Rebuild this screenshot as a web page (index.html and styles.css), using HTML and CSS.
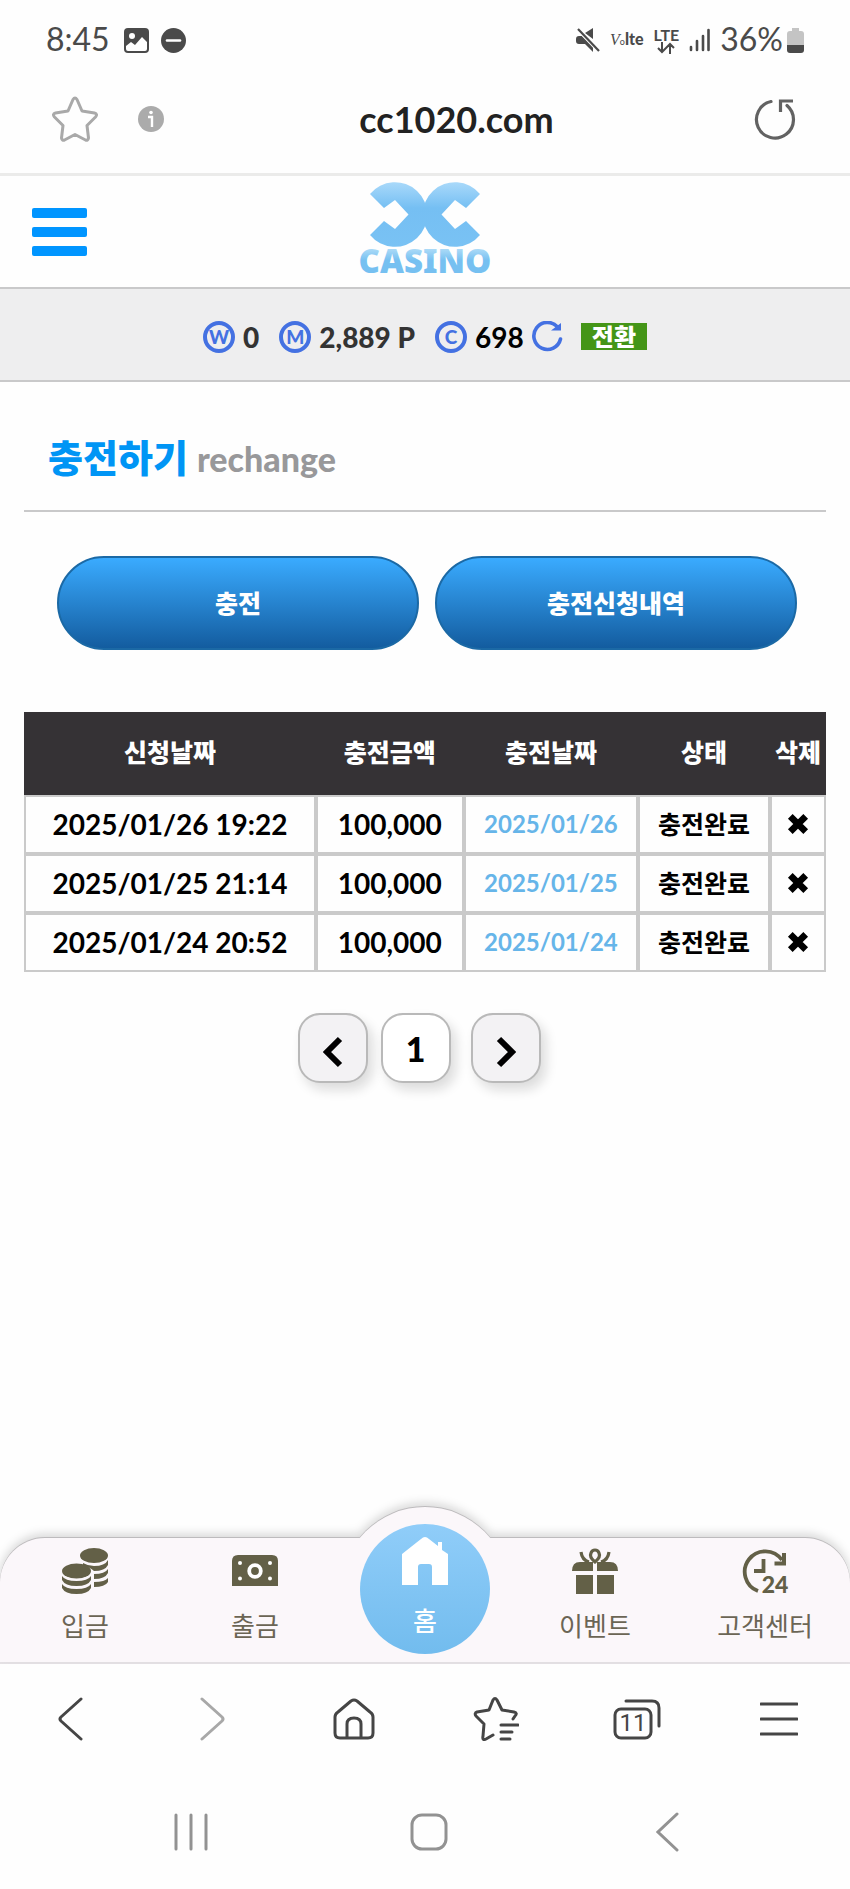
FILE: index.html
```html
<!DOCTYPE html>
<html lang="ko">
<head>
  <meta charset="UTF-8">
  <meta name="viewport" content="width=device-width, initial-scale=1.0">
  <title>충전하기</title>
  <link rel="stylesheet" href="styles.css">
</head>
<body>
  <div class="status-bar">
    <span class="status-text">8:45</span>
    <svg class="status-picture" width="25" height="25" viewBox="0 0 25 25">
      <rect width="25" height="25" rx="4" fill="#4a4a4a"/>
      <circle cx="8" cy="8" r="3" fill="#fff"/>
      <path d="M2 18l5-4 4 3 7-8 5 5v7q0 2-2 2H4q-2 0-2-2z" fill="#fff"/>
    </svg>
    <svg class="status-dnd" width="25" height="25" viewBox="0 0 25 25">
      <circle cx="12.5" cy="12.5" r="12.5" fill="#4a4a4a"/>
      <path d="M6 12.5h13" stroke="#fff" stroke-width="2.6" stroke-linecap="round"/>
    </svg>
    <div class="status-right">
      <svg width="24" height="24" viewBox="0 0 24 24">
        <path d="M17 0v11L9 5zM0 11q0-3 3-3h3l11 10v6l-8-8H3q-3 0-3-3z" fill="#4a4a4a"/>
        <path d="M2 1l20 21" stroke="#fff" stroke-width="4"/>
        <path d="M2 1l21 22" stroke="#4a4a4a" stroke-width="2.2"/>
      </svg>
      <span class="volte"><i>V</i><small>o</small><b>lte</b></span>
      <span class="lte">LTE
        <svg width="18" height="12" viewBox="0 0 18 12" fill="none" stroke="#4a4a4a" stroke-width="2">
          <path d="M5 0v10M1 6l4 4 4-4M13 12V2M9 6l4-4 4 4"/>
        </svg>
      </span>
      <svg width="21" height="24" viewBox="0 0 21 24" stroke="#4a4a4a" stroke-width="2.6" stroke-linecap="round">
        <path d="M2 19v3M8 13v9M14 8v14M19.500 2v20"/>
      </svg>
      <span class="status-text battery-text">36%</span>
      <svg width="17" height="25" viewBox="0 0 17 25">
        <path d="M5 0h7v3h2q3 0 3 3v12H0V6q0-3 3-3h2z" fill="#c4c4c4"/>
        <path d="M0 17h17v5q0 3-3 3H3q-3 0-3-3z" fill="#4a4a4a"/>
      </svg>
    </div>
  </div>

  <div class="url-bar">
    <button class="icon-btn" aria-label="Bookmark">
      <svg width="46" height="46" viewBox="0 0 46 46" fill="none" stroke="#a9a9a9" stroke-width="3" stroke-linejoin="round">
        <path d="M21 3.500Q23 .5 25 3.500L30 15l12.500 2Q46 18 43.500 21L35 29.500l1.500 12.500Q36 45 33.500 44L23 38.500 12.500 44Q10 45 9.500 42L11 29.500 2.500 21Q0 18 3.500 17L16 15z"/>
      </svg>
    </button>
    <button class="icon-btn" aria-label="Site information">
      <svg width="26" height="26" viewBox="0 0 26 26">
        <circle cx="13" cy="13" r="13" fill="#ababab"/>
        <circle cx="13" cy="6.500" r="1.800" fill="#fff"/>
        <path d="M10 11h4v10" fill="none" stroke="#fff" stroke-width="2.400"/>
      </svg>
    </button>
    <span class="url">cc1020.com</span>
    <button class="icon-btn" aria-label="Reload">
      <svg width="42" height="42" viewBox="0 0 42 42" fill="none" stroke="#626262" stroke-width="3.200" stroke-linecap="round">
        <path d="M17 3.500A18.500 18.500 0 1 0 33 7.500"/>
        <path d="M26.500 14V3H39" stroke-linecap="butt"/>
      </svg>
    </button>
  </div>

  <header class="site-header">
    <button class="menu-btn" aria-label="메뉴"><span></span><span></span><span></span></button>
    <a class="logo" href="#" aria-label="CASINO">
      <svg width="134" height="98" viewBox="0 14 134 98">
        <defs>
          <linearGradient id="mark" x1="0" y1="0" x2="0" y2="1">
            <stop offset="0" stop-color="#a9d9fa"/>
            <stop offset=".4" stop-color="#75bff3"/>
            <stop offset="1" stop-color="#79c2f4"/>
          </linearGradient>
          <linearGradient id="word" x1="0" y1="0" x2="0" y2="1">
            <stop offset=".2" stop-color="#b5dff8"/>
            <stop offset=".5" stop-color="#76c0f1"/>
          </linearGradient>
        </defs>
        <g fill="url(#mark)">
          <path d="M122 25L108 39 97 31 83.500 45.500 97 60l11-8 14 14A32.300 32.300 0 1 1 122 25z"/>
          <path d="M12 25L26 39 37 31 50.500 45.500 37 60 26 52 12 66A32.300 32.300 0 1 0 12 25z"/>
        </g>
        <text class="logo-word" x="67" y="104" text-anchor="middle" fill="url(#word)">CASINO</text>
      </svg>
    </a>
  </header>

  <section class="wallet">
    <span class="coin">W</span>
    <span class="amount">0</span>
    <span class="coin">M</span>
    <span class="amount">2,889 P</span>
    <span class="coin">C</span>
    <span class="amount casino">698</span>
    <button class="icon-btn" aria-label="새로고침">
      <svg width="31" height="32" viewBox="0 0 31 32" fill="none" stroke="#4471e2" stroke-width="3.600">
        <path d="M25.500 6A13.500 13.500 0 1 0 28.500 18" stroke-linecap="round"/>
        <path d="M19 9.500h10V2z" fill="#4471e2" stroke="none"/>
      </svg>
    </button>
    <button class="convert-btn">전환</button>
  </section>

  <main>
    <h1 class="page-title">충전하기 <small>rechange</small></h1>

    <div class="tabs">
      <button>충전</button>
      <button>충전신청내역</button>
    </div>

    <table class="history">
      <thead>
        <tr><th class="col-request">신청날짜</th><th class="col-amount">충전금액</th><th class="col-date">충전날짜</th><th class="col-state">상태</th><th class="col-delete">삭제</th></tr>
      </thead>
      <tbody>
        <tr>
          <td>2025/01/26 19:22</td><td>100,000</td><td class="done">2025/01/26</td><td class="state">충전완료</td>
          <td><button class="icon-btn" aria-label="삭제"><svg class="cross" viewBox="0 0 20 20"><path d="M3 3l14 14M17 3L3 17"/></svg></button></td>
        </tr>
        <tr>
          <td>2025/01/25 21:14</td><td>100,000</td><td class="done">2025/01/25</td><td class="state">충전완료</td>
          <td><button class="icon-btn" aria-label="삭제"><svg class="cross" viewBox="0 0 20 20"><path d="M3 3l14 14M17 3L3 17"/></svg></button></td>
        </tr>
        <tr>
          <td>2025/01/24 20:52</td><td>100,000</td><td class="done">2025/01/24</td><td class="state">충전완료</td>
          <td><button class="icon-btn" aria-label="삭제"><svg class="cross" viewBox="0 0 20 20"><path d="M3 3l14 14M17 3L3 17"/></svg></button></td>
        </tr>
      </tbody>
    </table>

    <nav class="pagination">
      <button aria-label="이전"><svg width="20" height="32" viewBox="0 0 20 32"><path d="M17 3L4 16l13 13"/></svg></button>
      <button class="current">1</button>
      <button class="next" aria-label="다음"><svg width="20" height="32" viewBox="0 0 20 32"><path d="M3 3l13 13L3 29"/></svg></button>
    </nav>
  </main>

  <nav class="bottom-nav">
    <div class="nav-shape"></div>
    <a href="#">
      <svg width="46" height="46" viewBox="0 0 46 46" fill="#636047">
        <ellipse cx="32" cy="7.500" rx="14" ry="7.500"/>
        <path d="M46 12v5q-3 6-14 6-4-4-11-5v-3q5 3 11 3 11 0 14-6zM46 21v4q-3 6-14 6v-5q11 0 14-5zM46 30v4q-3 5-14 5v-5q11 0 14-4z"/>
        <ellipse cx="14.500" cy="23" rx="14.500" ry="7.500"/>
        <path d="M0 28q3 5 14.500 5T29 28v4q-3 6-14.500 6T0 32zM0 36q3 5 14.500 5T29 36v4q-3 6-14.500 6T0 40z"/>
      </svg>
      <span>입금</span>
    </a>
    <a href="#">
      <svg width="46" height="46" viewBox="0 0 46 46">
        <path d="M0 13q0-6 6-6h34q6 0 6 6v25H0z" fill="#636047"/>
        <circle cx="23" cy="23" r="5.800" fill="none" stroke="#fff" stroke-width="3.800"/>
        <g fill="#fff"><circle cx="8" cy="15" r="2"/><circle cx="38" cy="15" r="2"/><circle cx="8" cy="30.500" r="2"/><circle cx="38" cy="30.500" r="2"/></g>
      </svg>
      <span>출금</span>
    </a>
    <a class="home" href="#">
      <svg width="48" height="48" viewBox="0 0 48 48" fill="#fff">
        <path d="M24 0q2 0 4 2l9 7V5h4v8l6 4v31H31V30q0-3-3-3h-8q-3 0-3 3v18H1V17L20 2q2-2 4-2z"/>
      </svg>
      <span>홈</span>
    </a>
    <a href="#">
      <svg width="46" height="46" viewBox="0 0 46 46" fill="#636047">
        <path d="M0 23q0-9 8-9h13v9zM46 23q0-9-8-9H25v9zM4 27h17v19H4zM25 27h17v19H25z"/>
        <path d="M9 4q1 8 8 10M37 4q-1 8-8 10M23 14q-6-5-4-9 1-3 4-3t4 3q2 4-4 9z" fill="none" stroke="#636047" stroke-width="3.200"/>
        <path d="M21 18h4v28h-4z" fill="#fbf7fa"/>
      </svg>
      <span>이벤트</span>
    </a>
    <a href="#">
      <svg class="support" width="48" height="46" viewBox="0 0 48 46" fill="none" stroke="#636047" stroke-width="3.800">
        <path d="M17 43A20.500 20.500 0 1 1 41 12"/>
        <path d="M33.500 15.500H43V5" stroke-width="4"/>
        <path d="M22.500 11v12H13"/>
        <text class="hours" x="34" y="45" text-anchor="middle">24</text>
      </svg>
      <span>고객센터</span>
    </a>
  </nav>

  <div class="browser-bar">
    <button class="icon-btn" aria-label="Back">
      <svg width="26" height="44" viewBox="0 0 26 44"><path d="M23 2L3 20q-2 2 0 4l20 18"/></svg>
    </button>
    <button class="icon-btn faded" aria-label="Forward">
      <svg width="26" height="44" viewBox="0 0 26 44"><path d="M3 2l20 18q2 2 0 4L3 42"/></svg>
    </button>
    <button class="icon-btn" aria-label="Home">
      <svg width="42" height="42" viewBox="0 0 42 42"><path d="M2 19q0-3 3-5L18 3q3-2 6 0l13 11q3 2 3 5v16q0 5-5 5H7q-5 0-5-5zM14 39V26q0-6 7-6t7 6v13"/></svg>
    </button>
    <button class="icon-btn" aria-label="Bookmarks">
      <svg width="46" height="44" viewBox="0 0 46 44"><path d="M20 38l-7 4q-4 2-3-3l1-12-8-8q-2-3 1-4l12-2 4-10q2-3 4 0l5 10 12 2q4 1 1 4l-2 3M28 28h17M28 35h11M28 42h9"/></svg>
    </button>
    <button class="icon-btn" aria-label="Tabs">
      <svg width="48" height="42" viewBox="0 0 48 42">
        <rect x="2" y="11" width="36" height="29" rx="6"/>
        <path d="M13 3h26q7 0 7 7v18"/>
        <text class="tab-count" x="20" y="33" text-anchor="middle">11</text>
      </svg>
    </button>
    <button class="icon-btn" aria-label="Menu">
      <svg width="38" height="36" viewBox="0 0 38 36"><path d="M1 3h36M1 18h36M1 33h36"/></svg>
    </button>
  </div>

  <div class="system-bar">
    <button class="icon-btn" aria-label="Recents">
      <svg width="36" height="38" viewBox="0 0 36 38"><path d="M3 2v34M18 2v34M33 2v34"/></svg>
    </button>
    <button class="icon-btn" aria-label="Home screen">
      <svg width="38" height="38" viewBox="0 0 38 38"><rect x="2" y="2" width="34" height="34" rx="10"/></svg>
    </button>
    <button class="icon-btn" aria-label="System back">
      <svg width="24" height="40" viewBox="0 0 24 40"><path d="M21 2L2 20l19 18"/></svg>
    </button>
  </div>
</body>
</html>
```

FILE: styles.css
```css
* {
  box-sizing: border-box;
}
body {
  margin: 0;
  min-height: 100vh;
  display: flex;
  flex-direction: column;
  background-color: #fefefe;
  color: #000;
  font-family: Lato, 'Noto Sans CJK KR', sans-serif;
}
button {
  font-family: inherit;
  cursor: pointer;
}
a {
  text-decoration: none;
}
svg {
  display: block;
  flex-shrink: 0;
}
.icon-btn {
  display: flex;
  align-items: center;
  justify-content: center;
  padding: 0;
  border: none;
  background: none;
}

/* phone status bar */
.status-bar {
  display: flex;
  align-items: center;
  height: 80px;
  padding: 0 46px;
  color: #4a4a4a;
}
.status-text {
  padding-bottom: 2px;
  font-size: 32px;
  line-height: 40px;
}
.status-picture {
  margin-left: 14px;
}
.status-dnd {
  margin-left: 12px;
}
.status-right {
  display: flex;
  align-items: center;
  gap: 10px;
  margin-left: auto;
}
.volte {
  font-size: 16px;
  line-height: 20px;
}
.volte i {
  font-family: 'Liberation Serif', serif;
}
.volte small {
  font-size: 9px;
}
.volte b {
  font-weight: 900;
}
.lte {
  display: flex;
  flex-direction: column;
  align-items: center;
  font-size: 16px;
  font-weight: 700;
  line-height: 15px;
}
.battery-text {
  margin-right: -6px;
}

.url-bar {
  display: flex;
  align-items: center;
  height: 96px;
  padding: 0 54px 16px 52px;
  border-bottom: 3px solid #ebebea;
}
.url-bar .icon-btn + .icon-btn {
  margin-left: 40px;
}
.url {
  flex: 1;
  padding-right: 5px;
  color: #222;
  font-size: 36px;
  font-weight: 700;
  line-height: 40px;
  text-align: center;
}

/* site header */
.site-header {
  display: grid;
  grid-template-columns: 1fr auto 1fr;
  align-items: center;
  height: 113px;
  padding: 0 32px;
  border-bottom: 2px solid #c9c9ca;
}
.menu-btn {
  display: flex;
  flex-direction: column;
  gap: 9px;
  width: 55px;
  padding: 0;
  border: none;
  background: none;
}
.menu-btn span {
  height: 10px;
  border-radius: 2px;
  background-color: #0095ff;
}
.logo svg {
  overflow: visible;
}
.logo-word {
  font-family: 'Noto Sans', sans-serif;
  font-size: 33px;
  font-weight: 900;
}

.wallet {
  display: flex;
  align-items: center;
  justify-content: center;
  height: 93px;
  padding-top: 4px;
  border-bottom: 2px solid #c9c9ca;
  background-color: #eeeeef;
}
.coin {
  display: flex;
  align-items: center;
  justify-content: center;
  width: 32px;
  height: 32px;
  border: 4px solid #4471e2;
  border-radius: 50%;
  color: #4471e2;
  font-size: 19px;
  font-weight: 900;
  line-height: 24px;
}
.amount {
  margin: 0 20px 0 8px;
  color: #333;
  font-size: 28px;
  font-weight: 900;
  line-height: 32px;
}
.casino {
  margin-right: 8px;
  color: #000;
  font-weight: 700;
}
.convert-btn {
  height: 27px;
  margin-left: 18px;
  padding: 0 11px;
  border: none;
  background-color: #449517;
  color: #fff;
  font-size: 24px;
  font-weight: 900;
  line-height: 24px;
}

/* content */
main {
  flex: 1;
  padding: 48px 24px 0;
}
.page-title {
  margin: 0;
  padding: 0 24px 24px;
  border-bottom: 2px solid #c9c9ca;
  color: #0095f5;
  font-size: 38px;
  font-weight: 900;
  line-height: 54px;
}
.page-title small {
  color: #98989a;
  font-size: 34px;
}
.tabs {
  display: grid;
  grid-template-columns: 1fr 1fr;
  gap: 16px;
  padding: 44px 29px 62px 33px;
}
.tabs button {
  height: 94px;
  padding-bottom: 4px;
  border: 2px solid #1b69a5;
  border-radius: 47px;
  background: linear-gradient(#3aabff, #135c9f);
  color: #fff;
  font-size: 25px;
  font-weight: 900;
}
.history {
  width: 100%;
  border-collapse: separate;
  border-spacing: 0;
  table-layout: fixed;
  text-align: center;
}
.history th {
  height: 83px;
  padding: 0 0 6px;
  background-color: #353235;
  color: #fff;
  font-size: 25px;
  font-weight: 900;
}
.history td {
  height: 59px;
  padding: 0 0 2px;
  border: 2px solid #cacaca;
  font-size: 28px;
  font-weight: 700;
  line-height: 32px;
}
.col-request {
  width: 36.4%;
}
.col-amount {
  width: 18.4%;
}
.col-date {
  width: 21.8%;
}
.col-state {
  width: 16.4%;
}
.col-delete {
  width: 7%;
}
.history .done {
  color: #66b5e9;
  font-size: 24px;
}
.history .state {
  font-size: 25px;
}
.history .icon-btn {
  width: 100%;
}
.cross {
  width: 22px;
  height: 22px;
  fill: none;
  stroke: #000;
  stroke-width: 6;
}
.pagination {
  display: flex;
  justify-content: center;
  gap: 13px;
  padding: 41px 12px 0 0;
}
.pagination button {
  display: flex;
  align-items: center;
  justify-content: center;
  width: 70px;
  height: 70px;
  padding: 0;
  border: 2px solid #b9b9b9;
  border-radius: 22px;
  background-color: #f3f2f4;
  box-shadow: 5px 7px 12px #dcdcdc;
  color: #000;
  font-size: 34px;
  font-weight: 900;
}
.pagination button.current {
  background-color: #fff;
}
.pagination .next {
  margin-left: 7px;
}
.pagination path {
  fill: none;
  stroke: #000;
  stroke-width: 6;
}
.pagination svg {
  margin-top: 8px;
}

/* bottom menu, the home circle rises above the bar */
.bottom-nav {
  position: relative;
  display: grid;
  grid-template-columns: repeat(5, 1fr);
  height: 126px;
  border-bottom: 2px solid #e6e2e6;
}
.nav-shape {
  position: absolute;
  inset: 0;
  border-radius: 45px 45px 0 0;
  background-color: #fbf7fa;
  filter: drop-shadow(0 -1px 0 #bdbbbd) drop-shadow(0 -3px 5px #d6d6d6);
}
.nav-shape::before {
  content: '';
  position: absolute;
  left: calc(50% - 84px);
  bottom: 0;
  width: 168px;
  height: 155px;
  border-radius: 84px 84px 0 0;
  background-color: #fbf7fa;
}
.bottom-nav a {
  position: relative;
  display: flex;
  flex-direction: column;
  align-items: center;
  gap: 12px;
  padding-top: 10px;
  color: #6b6555;
  font-size: 26px;
  line-height: 40px;
}
.bottom-nav .home {
  justify-self: center;
  gap: 16px;
  width: 130px;
  height: 130px;
  margin-top: -14px;
  padding-top: 13px;
  border-radius: 50%;
  background: linear-gradient(#90cdf9, #72bcee);
  color: #fff;
}
.home span {
  font-weight: 500;
}
.support {
  overflow: visible;
}
.hours {
  fill: #636047;
  stroke: none;
  font-size: 23px;
  font-weight: 900;
}

.browser-bar {
  position: relative;
  display: grid;
  grid-template-columns: repeat(6, 1fr);
  height: 110px;
  background-color: #fefefe;
}
.browser-bar svg {
  fill: none;
  stroke: #454545;
  stroke-width: 3;
  stroke-linecap: round;
  stroke-linejoin: round;
}
.browser-bar .faded svg {
  stroke: #a8a8a8;
}
.browser-bar .tab-count {
  fill: #454545;
  stroke: none;
  font-family: Roboto, sans-serif;
  font-size: 24px;
}
.system-bar {
  display: grid;
  grid-template-columns: repeat(3, 1fr);
  height: 115px;
  padding: 0 63px 0 72px;
}
.system-bar svg {
  fill: none;
  stroke: #929292;
  stroke-width: 3;
  stroke-linecap: round;
}
```
